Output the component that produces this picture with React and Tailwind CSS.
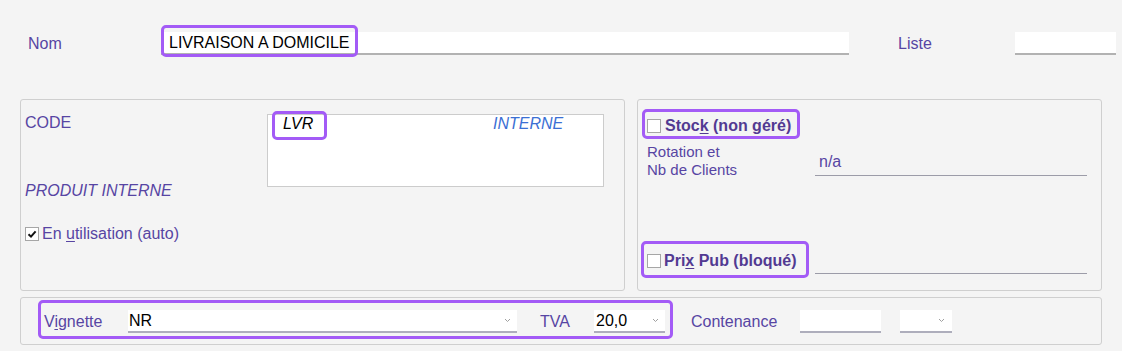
const Check = ({ checked }) => (
  <span className="w-[14px] h-[14px] bg-white border border-[#a6a6a6] flex items-center justify-center shrink-0">
    {checked && (
      <svg width="10" height="10" viewBox="0 0 10 10">
        <path d="M1.5 5.2 L4 7.6 L8.6 2.4" fill="none" stroke="#111" strokeWidth="2" />
      </svg>
    )}
  </span>
);

const Chevron = () => (
  <svg width="7" height="5" viewBox="0 0 7 5" className="shrink-0">
    <path d="M1 1 L3.5 3.5 L6 1" fill="none" stroke="#a0a0a0" strokeWidth="1" />
  </svg>
);

const Hl = ({ className }) => (
  <span className={"absolute border-[3px] border-[#a35bf6] rounded-[5px] pointer-events-none " + className} />
);

export default function App() {
  return (
    <div className="w-[1122px] h-[351px] bg-[#f4f4f4] overflow-hidden text-[16px] leading-[18px] text-[#5745a3] font-['Liberation_Sans',Arial,sans-serif]">
      {/* Nom row */}
      <div className="flex items-center pt-[32px] pl-[28px]">
        <div className="w-[133px]">Nom</div>
        <div className="relative w-[688px] h-[23px] bg-white border-b-2 border-[#b2b2b2] text-black flex items-center pl-[8px]">
          <span>LIVRAISON A DOMICILE</span>
          <Hl className="left-0 top-[-7px] w-[197px] h-[32px]" />
        </div>
        <div className="ml-[49px] w-[117px]">Liste</div>
        <div className="w-[101px] h-[23px] bg-white border-b-2 border-[#b2b2b2]" />
      </div>

      {/* Groups */}
      <div className="flex gap-[12px] mt-[44px] ml-[20px]">
        <div className="w-[605px] h-[192px] border border-[#cfcfcf] rounded-[3px] pt-[14px] pl-[4px]">
          <div className="flex">
            <div className="w-[242px] flex flex-col">
              <div>CODE</div>
              <div className="mt-[50px] italic">PRODUIT INTERNE</div>
            </div>
            <div className="w-[337px] h-[73px] bg-white border border-[#cccccc] flex pl-[15px]">
              <div className="w-[210px]">
                <span className="relative italic text-black">
                  LVR
                  <Hl className="left-[-11px] top-[-4px] w-[55px] h-[29px]" />
                </span>
              </div>
              <span className="italic text-[#3b6fd4]">INTERNE</span>
            </div>
          </div>
          <div className="mt-[25px] flex items-center gap-[3px]">
            <Check checked />
            <span>
              En <span className="underline underline-offset-2">u</span>tilisation (auto)
            </span>
          </div>
        </div>

        <div className="w-[465px] h-[192px] border border-[#cfcfcf] rounded-[3px] pt-[17px] pl-[9px] pb-[16px] flex flex-col">
          <div className="relative flex items-center gap-[4px] h-[18px] font-bold text-[#523a92]">
            <Check />
            <span>
              Stoc<span className="underline underline-offset-2">k</span> (non géré)
            </span>
            <Hl className="left-[-5px] top-[-8px] w-[158px] h-[30px]" />
          </div>
          <div className="flex mt-[8px] text-[15px] leading-[18px]">
            <div className="w-[168px]">
              Rotation et
              <br />
              Nb de Clients
            </div>
            <div className="mt-[8px] w-[272px] h-[25px] border-b border-[#9c9ca8] pl-[4px] pt-[2px] text-[16px]">n/a</div>
          </div>
          <div className="mt-auto flex items-end">
            <div className="relative w-[168px] mb-[4px] flex items-center gap-[3px] h-[18px] font-bold text-[#523a92]">
              <Check />
              <span>
                Pri<span className="underline underline-offset-2">x</span> Pub (bloqué)
              </span>
              <Hl className="left-[-6px] top-[-11px] w-[168px] h-[37px]" />
            </div>
            <div className="w-[272px] h-[20px] border-b border-[#9c9ca8]" />
          </div>
        </div>
      </div>

      {/* Bottom group */}
      <div className="relative mt-[6px] ml-[20px] w-[1082px] h-[48px] border border-[#cfcfcf] rounded-[3px] flex items-center pl-[23px] pt-[1px]">
        <div className="w-[84px]">
          V<span className="underline underline-offset-2">i</span>gnette
        </div>
        <div className="w-[389px] h-[23px] bg-white border-b-2 border-[#aeaebc] flex items-center justify-between pl-[1px] pr-[6px] text-black">
          <span>NR</span>
          <Chevron />
        </div>
        <div className="ml-[23px] w-[54px]">TVA</div>
        <div className="w-[71px] h-[23px] bg-white border-b-2 border-[#aeaebc] flex items-center justify-between pl-[2px] pr-[6px] text-black">
          <span>20,0</span>
          <Chevron />
        </div>
        <div className="ml-[26px] w-[109px]">Contenance</div>
        <div className="w-[81px] h-[23px] bg-white border-b-2 border-[#aeaebc]" />
        <div className="ml-[19px] w-[52px] h-[23px] bg-white border-b-2 border-[#aeaebc] flex items-center justify-end pr-[7px]">
          <Chevron />
        </div>
        <Hl className="left-[17px] top-[2px] w-[635px] h-[39px]" />
      </div>
    </div>
  );
}
